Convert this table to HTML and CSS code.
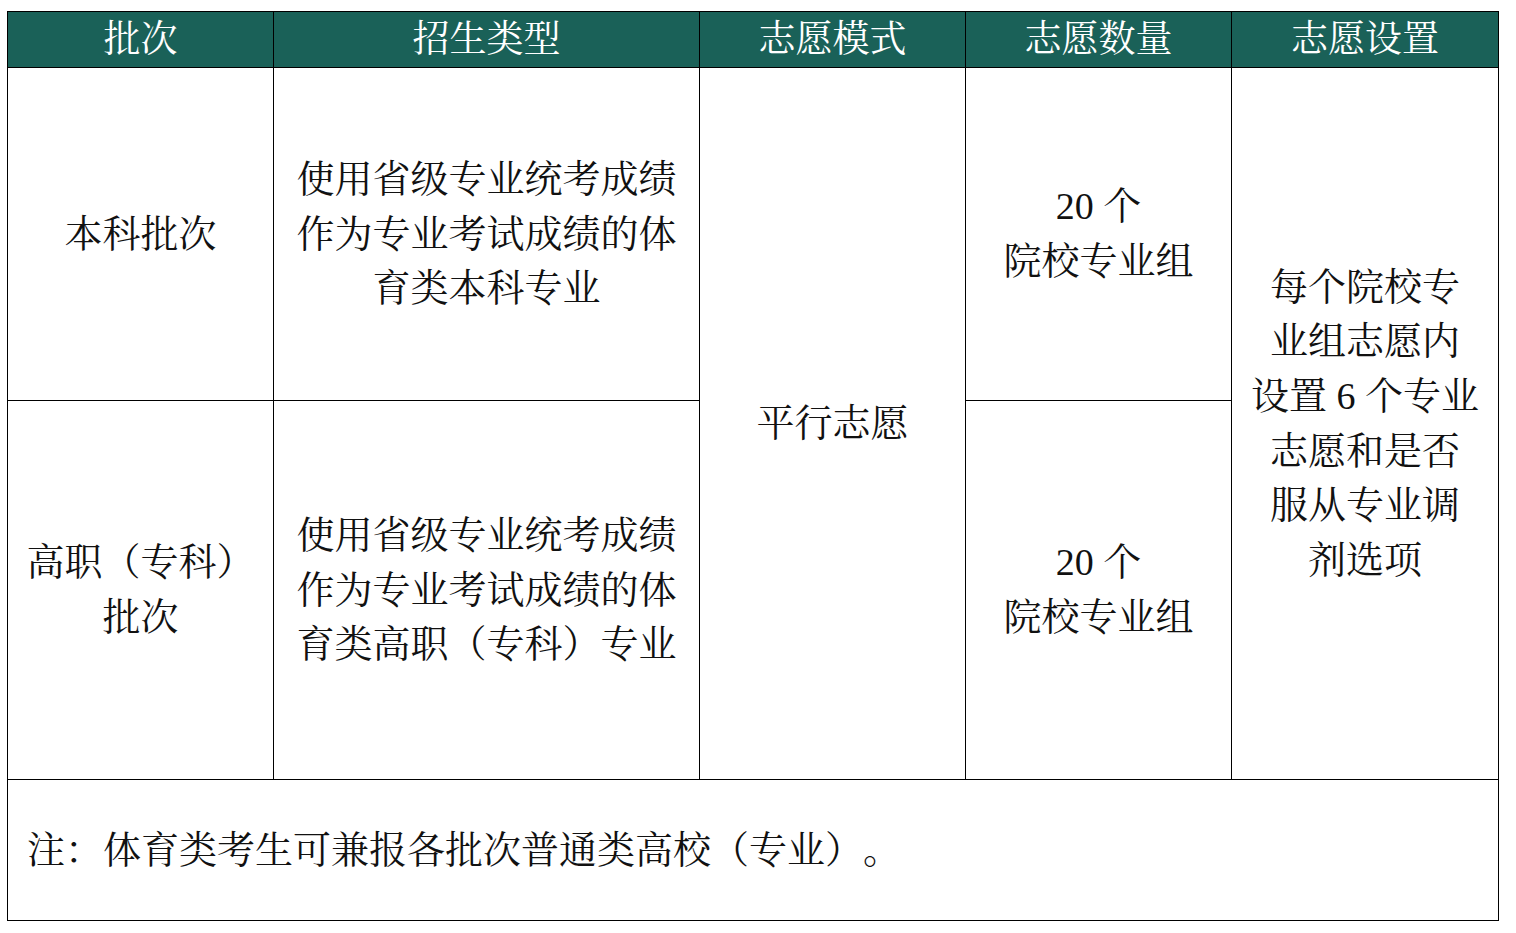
FILE: index.html
```html
<!DOCTYPE html>
<html lang="zh-CN">
<head>
<meta charset="utf-8">
<link rel="stylesheet" href="styles.css">
</head>
<body>
<table class="plan">
  <colgroup>
    <col class="c1"><col class="c2"><col class="c3"><col class="c4"><col class="c5">
  </colgroup>
  <thead>
    <tr class="head">
      <th>批次</th>
      <th>招生类型</th>
      <th>志愿模式</th>
      <th>志愿数量</th>
      <th>志愿设置</th>
    </tr>
  </thead>
  <tbody>
    <tr class="r1">
      <td>本科批次</td>
      <td>使用省级专业统考成绩<br>作为专业考试成绩的体<br>育类本科专业</td>
      <td rowspan="2">平行志愿</td>
      <td>20 个<br>院校专业组</td>
      <td rowspan="2">每个院校专<br>业组志愿内<br>设置 6 个专业<br>志愿和是否<br>服从专业调<br>剂选项</td>
    </tr>
    <tr class="r2">
      <td>高职（专科）<br>批次</td>
      <td>使用省级专业统考成绩<br>作为专业考试成绩的体<br>育类高职（专科）专业</td>
      <td>20 个<br>院校专业组</td>
    </tr>
    <tr class="note">
      <td colspan="5">注：体育类考生可兼报各批次普通类高校（专业）。</td>
    </tr>
  </tbody>
</table>
</body>
</html>
```

FILE: styles.css
```css
html, body {
  margin: 0;
  padding: 0;
  background: #ffffff;
}

body {
  padding: 11px 0 0 7px;
}

.plan {
  border-collapse: collapse;
  table-layout: fixed;
  width: 1491px;
  font-family: "Liberation Serif", "Noto Serif CJK SC", "Noto Sans CJK SC", serif;
  font-size: 38px;
  line-height: 54.6px;
  color: #111111;
  text-spacing-trim: space-all;
  font-feature-settings: "halt" 0, "palt" 0, "chws" 0;
}

.c1 { width: 266px; }
.c2 { width: 426px; }
.c3 { width: 266px; }
.c4 { width: 266px; }
.c5 { width: 267px; }

.plan th,
.plan td {
  border: 1px solid #000000;
  text-align: center;
  vertical-align: middle;
  padding: 0;
}

.head th {
  height: 55px;
  background: #1a6158;
  color: #ffffff;
  font-weight: normal;
  font-size: 37px;
  line-height: 44px;
}

.r1 td {
  height: 332px;
}

.r2 td {
  height: 378px;
}

.note td {
  height: 140px;
  text-align: left;
  padding-left: 19px;
}
```
